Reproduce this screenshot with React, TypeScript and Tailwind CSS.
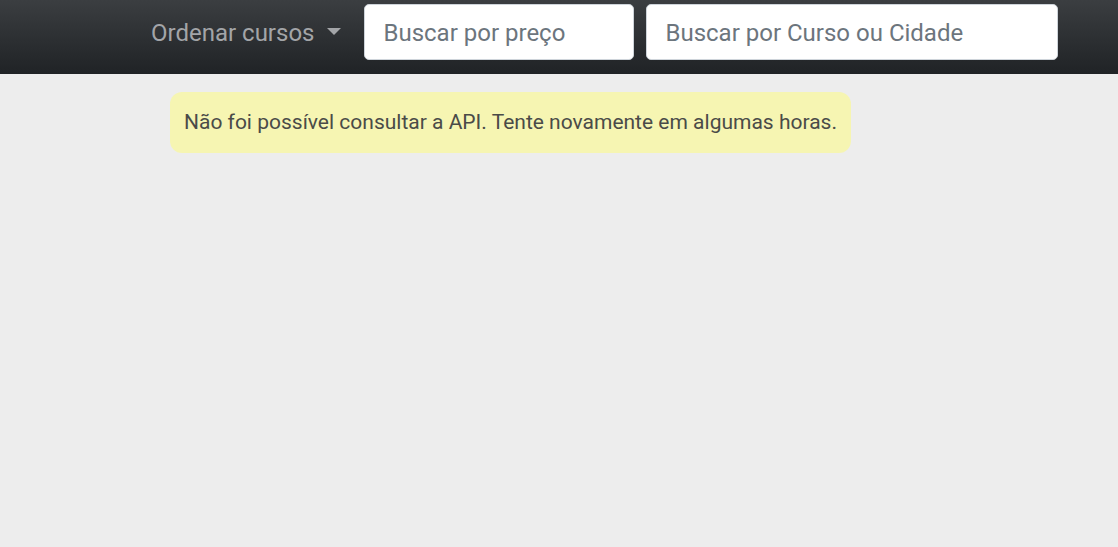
export default function App() {
  return (
    <div className="min-h-[547px] w-full bg-[#ededed]" style={{ fontFamily: 'Roboto, "Liberation Sans", sans-serif' }}>
      <nav className="h-[74px] w-full bg-gradient-to-b from-[#3b3e41] to-[#202326] flex items-start pt-[4px]">
        <div className="flex items-center pl-[151px]">
          <button className="flex items-center text-[24px] text-[#a3a5a8] leading-none pt-[2px]">
            <span>Ordenar cursos</span>
            <span className="ml-[13px] inline-block w-0 h-0 border-l-[7px] border-r-[7px] border-t-[7px] border-l-transparent border-r-transparent border-t-[#a3a5a8] mb-[4px]" />
          </button>
          <input
            className="ml-[23px] w-[270px] h-[56px] rounded-[5px] bg-white border border-[#ced4da] pl-[18px] pr-[18px] pt-[2px] text-[24px] text-[#495057] placeholder:text-[#6c757d] outline-none"
            placeholder="Buscar por preço"
          />
          <input
            className="ml-[12px] w-[412px] h-[56px] rounded-[5px] bg-white border border-[#ced4da] pl-[18px] pr-[18px] pt-[2px] text-[24px] text-[#495057] placeholder:text-[#6c757d] outline-none"
            placeholder="Buscar por Curso ou Cidade"
          />
        </div>
      </nav>
      <div className="pl-[170px] pt-[18px]">
        <div className="inline-block bg-[#f6f5b2] rounded-[12px] px-[14px] py-[15px] text-[21px] leading-[31px] text-[#4a4b48]">
          Não foi possível consultar a API. Tente novamente em algumas horas.
        </div>
      </div>
    </div>
  );
}
